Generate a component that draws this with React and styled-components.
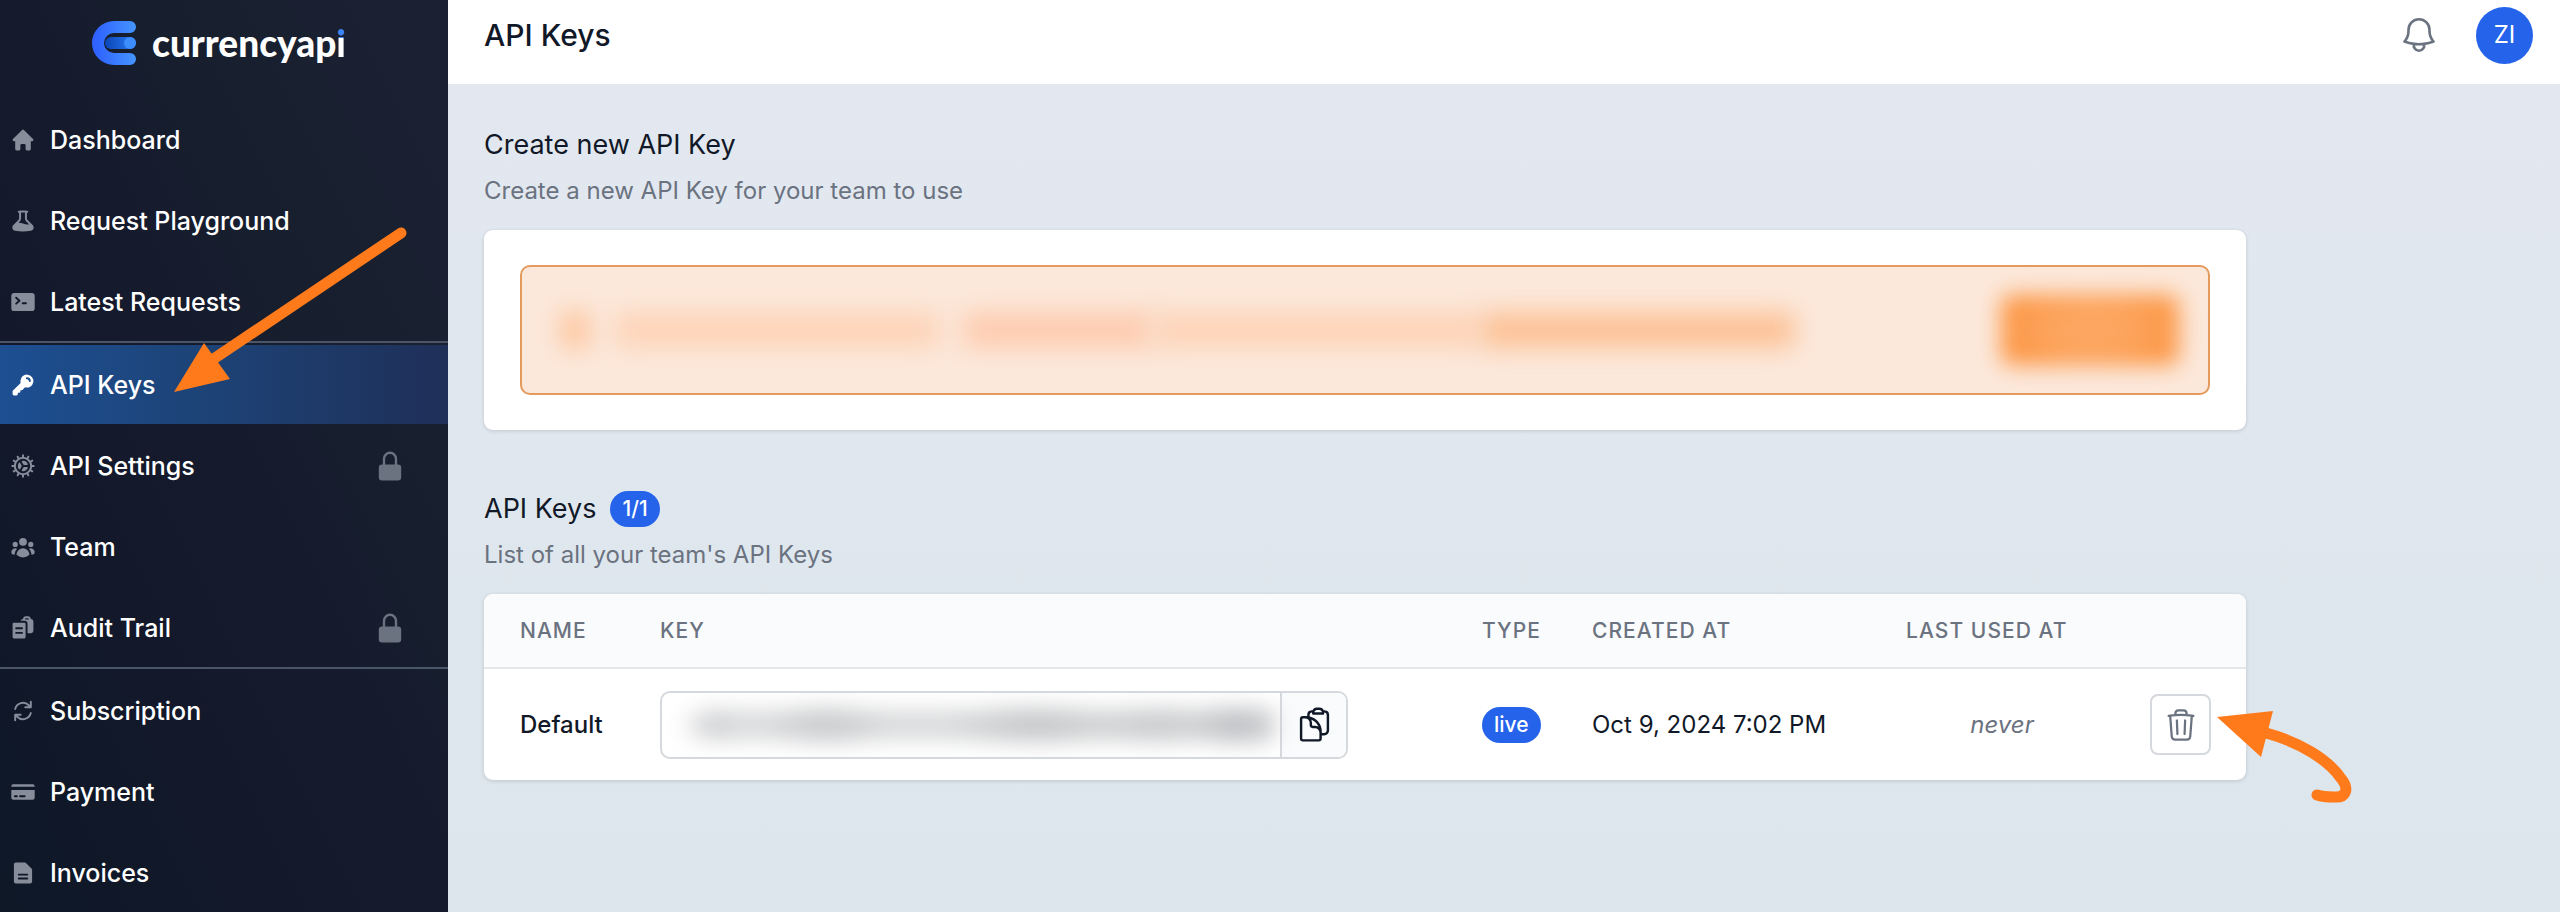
import React from "react";
import styled, { createGlobalStyle, css } from "styled-components";
import {
  HiMiniHome,
  HiMiniBeaker,
  HiMiniCommandLine,
  HiMiniKey,
  HiMiniCog,
  HiMiniUserGroup,
  HiMiniClipboardDocumentList,
  HiMiniArrowPath,
  HiMiniCreditCard,
  HiMiniDocumentText,
  HiMiniLockClosed,
  HiOutlineBell,
  HiOutlineTrash,
  HiOutlineClipboardDocument,
} from "react-icons/hi2";

const orange = "#ff7a1a";

const GlobalStyle = createGlobalStyle`
  *, *::before, *::after { box-sizing: border-box; }
  body {
    margin: 0;
    color: #111827;
    font-family: Inter, "Liberation Sans", sans-serif;
    font-size: 24px;
    line-height: 36px;
  }
  h1, h2, p { margin: 0; }
  button, input { font: inherit; color: inherit; }
`;

const Shell = styled.div`
  display: flex;
  height: 100vh;
  overflow: hidden;
`;

const Sidebar = styled.aside`
  flex: 0 0 448px;
  background: linear-gradient(to top right, #0e1827 0%, #14192b 40%, #18202f 75%, #1c2033 100%);
`;

const Brand = styled.a`
  display: flex;
  align-items: center;
  gap: 16px;
  height: 100px;
  padding: 0 0 14px 92px;
  color: #fff;
  font-family: Lato, "Liberation Sans", sans-serif;
  font-size: 37px;
  font-weight: 900;
  text-decoration: none;
`;

const TintedLetter = styled.span`
  color: transparent;
  background: linear-gradient(#3b82f6 0 39%, #fff 39%);
  background-clip: text;
`;

const NavGroup = styled.ul`
  display: grid;
  gap: 2px;
  margin: 0;
  padding: 0 0 2px;
  list-style: none;

  & + & {
    margin-top: -2px;
    padding-top: 2px;
    border-top: 2px solid #4b5568;
  }
`;

const NavItem = styled.li`
  position: relative;
`;

const NavLink = styled.a`
  display: flex;
  align-items: center;
  gap: 14px;
  height: 79px;
  padding: 0 42px 0 10px;
  color: #fff;
  font-size: 25px;
  font-weight: 500;
  text-decoration: none;

  > svg {
    flex: none;
    color: #878d9b;
  }

  > svg:last-child {
    color: #6b7280;
  }

  ${(p) =>
    p.$active &&
    css`
      background: linear-gradient(to right, #1d4f92, #1d4377 45%, #1f2f58);
      > svg { color: #fff; }
    `}
`;

const NavLabel = styled.span`
  flex: 1;
`;

const NavPointer = styled.svg`
  position: absolute;
  z-index: 2;
  left: 170px;
  top: -121px;
  pointer-events: none;
`;

const Page = styled.div`
  flex: 1;
  display: flex;
  flex-direction: column;
  min-width: 0;
`;

const Header = styled.header`
  flex: none;
  display: flex;
  align-items: center;
  justify-content: space-between;
  height: 84px;
  padding: 0 27px 14px 36px;
  background: #fff;
`;

const PageTitle = styled.h1`
  font-size: 30px;
  font-weight: 500;
`;

const HeaderActions = styled.div`
  display: flex;
  align-items: center;
  gap: 36px;
`;

const IconButton = styled.button`
  display: flex;
  padding: 0;
  border: 0;
  background: none;
  color: #6b7280;
`;

const Avatar = styled.button`
  width: 57px;
  height: 57px;
  padding: 0;
  border: 0;
  border-radius: 50%;
  background: #2563eb;
  color: #fff;
`;

const Content = styled.main`
  flex: 1;
  display: grid;
  align-content: start;
  gap: 61px;
  padding: 43px 36px;
  background: linear-gradient(#e3e8f0, #dce6ec);
`;

const Section = styled.section`
  max-width: 1762px;
`;

const SectionTitle = styled.h2`
  display: flex;
  align-items: center;
  gap: 14px;
  height: 36px;
  font-size: 27px;
  font-weight: 400;
`;

const SectionNote = styled.p`
  margin: 10px 0 21px;
  color: #6b7280;
`;

const Badge = styled.span`
  display: inline-block;
  height: 36px;
  padding: 0 12px;
  border-radius: 18px;
  background: #2563eb;
  color: #fff;
  font-size: 21px;
  font-weight: 500;
`;

const Card = styled.div`
  overflow: hidden;
  border-radius: 9px;
  background: #fff;
  box-shadow: 0 1px 4px rgba(0, 0, 0, 0.14);
`;

const CardBody = styled.div`
  padding: 35px 36px;
`;

const Alert = styled.div`
  display: flex;
  align-items: center;
  height: 130px;
  padding: 0 29px 0 39px;
  border: 2px solid #e39a5c;
  border-radius: 10px;
  background: #fce8da;
`;

const Smudge = styled.span`
  flex: 0 1 ${(p) => p.$width}px;
  height: ${(p) => p.$height}px;
  margin-right: ${(p) => p.$gap}px;
  border-radius: 8px;
  background: ${(p) => p.$tone};
  filter: blur(12px);
`;

const AlertButton = styled.button`
  width: 178px;
  height: 70px;
  margin-left: auto;
  border: 0;
  border-radius: 10px;
  background: radial-gradient(ellipse, #fca763 30%, #fc9542 75%);
  filter: blur(11px);
`;

const Table = styled.table`
  width: 100%;
  table-layout: fixed;
  border-collapse: collapse;
`;

const Col = styled.col`
  width: ${(p) => p.$width}px;
`;

const HeadCell = styled.th`
  height: 74px;
  padding: 0 18px;
  border-bottom: 2px solid #e5e7eb;
  background: #f9fbfc;
  color: #6b7280;
  font-size: 21px;
  font-weight: 500;
  letter-spacing: 0.05em;
  text-align: left;
  text-transform: uppercase;
  white-space: nowrap;

  &:first-child { padding-left: 36px; }
`;

const Cell = styled.td`
  height: 112px;
  padding: 0 18px;
  white-space: nowrap;

  &:first-child { padding-left: 36px; }
`;

const NameCell = styled(Cell)`
  font-weight: 500;
`;

const NeverCell = styled(Cell)`
  color: #6b7280;
  font-style: italic;
  text-align: center;
`;

const ActionCell = styled(Cell)`
  padding: 0 35px 0 0;
`;

const KeyField = styled.div`
  display: flex;
  width: 688px;
  height: 68px;
  border: 2px solid #d5d8dd;
  border-radius: 10px;
  overflow: hidden;
`;

const KeyInput = styled.input`
  flex: 1;
  min-width: 0;
  margin: 6px 0 6px 10px;
  padding: 0;
  border: 0;
  background:
    radial-gradient(ellipse at center, #cbccce, transparent 70%) 6px 50% / 60px 44px no-repeat,
    radial-gradient(ellipse at center, #c8c9cb, transparent 72%) 90px 50% / 130px 50px no-repeat,
    radial-gradient(ellipse at center, #c4c5c7, transparent 72%) 270px 50% / 190px 50px no-repeat,
    radial-gradient(ellipse at center, #c8c9cb, transparent 72%) 410px 50% / 150px 48px no-repeat,
    radial-gradient(ellipse at center, #bbbcc0, transparent 72%) 510px 50% / 110px 52px no-repeat,
    linear-gradient(#dcddde, #dcddde) 40px 50% / 560px 32px no-repeat;
  filter: blur(10px);
`;

const CopyButton = styled.button`
  flex: 0 0 66px;
  display: flex;
  align-items: center;
  justify-content: center;
  padding: 0;
  border: 0;
  border-left: 2px solid #d5d8dd;
  background: #f9fbfc;
`;

const DeleteButton = styled.button`
  display: flex;
  align-items: center;
  justify-content: center;
  width: 61px;
  height: 61px;
  margin-left: auto;
  padding: 0;
  border: 2px solid #d5d8dd;
  border-radius: 8px;
  background: #fff;
  color: #6b7280;
`;

const TableFrame = styled.div`
  position: relative;
`;

const DeletePointer = styled.svg`
  position: absolute;
  z-index: 2;
  right: -116px;
  bottom: -24px;
  pointer-events: none;
`;

const groups = [
  [
    { label: "Dashboard", icon: HiMiniHome },
    { label: "Request Playground", icon: HiMiniBeaker },
    { label: "Latest Requests", icon: HiMiniCommandLine },
  ],
  [
    { label: "API Keys", icon: HiMiniKey, active: true },
    { label: "API Settings", icon: HiMiniCog, locked: true },
    { label: "Team", icon: HiMiniUserGroup },
    { label: "Audit Trail", icon: HiMiniClipboardDocumentList, locked: true },
  ],
  [
    { label: "Subscription", icon: HiMiniArrowPath },
    { label: "Payment", icon: HiMiniCreditCard },
    { label: "Invoices", icon: HiMiniDocumentText },
  ],
];

const columns = [
  { label: "Name", width: 158 },
  { label: "Key" },
  { label: "Type", width: 110 },
  { label: "Created at", width: 314 },
  { label: "Last used at", width: 228 },
];

function Logo() {
  return (
    <svg width="44" height="44" viewBox="0 0 44 44" aria-hidden="true">
      <defs>
        <linearGradient id="mark" x1="0" y1="0" x2="1" y2="0">
          <stop offset="0.1" stopColor="#2f62ff" />
          <stop offset="1" stopColor="#4596ff" />
        </linearGradient>
        <linearGradient id="bar" x1="0" y1="0" x2="1" y2="0">
          <stop offset="0" stopColor="#0b46b8" />
          <stop offset="0.75" stopColor="#2370e6" />
        </linearGradient>
      </defs>
      <path
        d="M22 0H38a6 6 0 0 1 0 12H22a10 10 0 0 0 0 20H38a6 6 0 0 1 0 12H22A22 22 0 0 1 22 0Z"
        fill="url(#mark)"
      />
      <rect x="13" y="16" width="31" height="12" rx="6" fill="url(#bar)" />
      <circle cx="38" cy="22" r="6" fill="#3d8dfd" />
    </svg>
  );
}

export default function App() {
  return (
    <>
      <GlobalStyle />
      <Shell>
        <Sidebar>
          <Brand href="#">
            <Logo />
            <span>
              currencyap<TintedLetter>i</TintedLetter>
            </span>
          </Brand>
          <nav aria-label="Main">
            {groups.map((items, index) => (
              <NavGroup key={index}>
                {items.map(({ label, icon: Icon, active, locked }) => (
                  <NavItem key={label}>
                    <NavLink href="#" $active={active} aria-current={active ? "page" : undefined}>
                      <Icon size={26} aria-hidden="true" />
                      <NavLabel>{label}</NavLabel>
                      {locked && <HiMiniLockClosed size={32} aria-label="Locked" />}
                    </NavLink>
                    {active && (
                      <NavPointer width="245" height="172" viewBox="0 0 245 172" aria-hidden="true">
                        <path d="M231 9L42 136" stroke={orange} strokeWidth="11" strokeLinecap="round" />
                        <path d="M4 168L34 119L60 155Z" fill={orange} />
                      </NavPointer>
                    )}
                  </NavItem>
                ))}
              </NavGroup>
            ))}
          </nav>
        </Sidebar>

        <Page>
          <Header>
            <PageTitle>API Keys</PageTitle>
            <HeaderActions>
              <IconButton aria-label="Notifications">
                <HiOutlineBell size={42} />
              </IconButton>
              <Avatar aria-label="Account">ZI</Avatar>
            </HeaderActions>
          </Header>

          <Content>
            <Section>
              <SectionTitle>Create new API Key</SectionTitle>
              <SectionNote>Create a new API Key for your team to use</SectionNote>
              <Card>
                <CardBody>
                  <Alert>
                    <Smudge $width={28} $height={38} $gap={26} $tone="#fdc59e" />
                    <Smudge $width={324} $height={34} $gap={24} $tone="#fdd3b7" />
                    <Smudge $width={190} $height={36} $gap={0} $tone="#fdccb0" />
                    <Smudge $width={328} $height={34} $gap={0} $tone="#fdd3b7" />
                    <Smudge $width={314} $height={36} $gap={20} $tone="#fcc297" />
                    <AlertButton aria-label="Upgrade" />
                  </Alert>
                </CardBody>
              </Card>
            </Section>

            <Section>
              <SectionTitle>
                API Keys <Badge>1/1</Badge>
              </SectionTitle>
              <SectionNote>List of all your team's API Keys</SectionNote>
              <TableFrame>
                <Card>
                  <Table>
                    <colgroup>
                      {columns.map((c) => (
                        <Col key={c.label} $width={c.width} />
                      ))}
                      <Col $width={130} />
                    </colgroup>
                    <thead>
                      <tr>
                        {columns.map((c) => (
                          <HeadCell key={c.label} scope="col">{c.label}</HeadCell>
                        ))}
                        <HeadCell as="td" />
                      </tr>
                    </thead>
                    <tbody>
                      <tr>
                        <NameCell>Default</NameCell>
                        <Cell>
                          <KeyField>
                            <KeyInput readOnly aria-label="Key" />
                            <CopyButton aria-label="Copy key">
                              <HiOutlineClipboardDocument size={39} />
                            </CopyButton>
                          </KeyField>
                        </Cell>
                        <Cell>
                          <Badge>live</Badge>
                        </Cell>
                        <Cell>Oct 9, 2024 7:02 PM</Cell>
                        <NeverCell>never</NeverCell>
                        <ActionCell>
                          <DeleteButton aria-label="Delete key">
                            <HiOutlineTrash size={36} />
                          </DeleteButton>
                        </ActionCell>
                      </tr>
                    </tbody>
                  </Table>
                </Card>
                <DeletePointer width="146" height="98" viewBox="0 0 146 98" aria-hidden="true">
                  <path d="M1 11L57 5L45 51Z" fill={orange} />
                  <path
                    d="M50 27C84 36 112 54 124 71C135 84 129 92 118 91C110 91 104 90 101 89"
                    fill="none"
                    stroke={orange}
                    strokeWidth="11"
                    strokeLinecap="round"
                  />
                </DeletePointer>
              </TableFrame>
            </Section>
          </Content>
        </Page>
      </Shell>
    </>
  );
}
